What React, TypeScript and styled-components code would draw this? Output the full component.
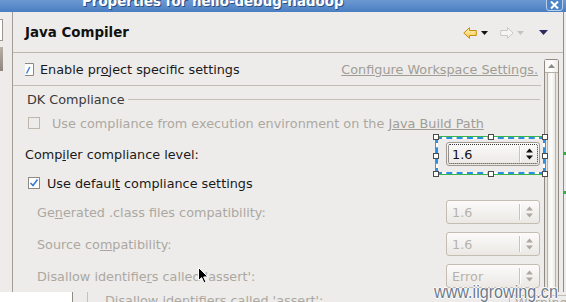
import React from 'react';
import styled, { createGlobalStyle } from 'styled-components';

const GlobalStyle = createGlobalStyle`
  html, body {
    margin: 0;
    padding: 0;
    background: #edeceb;
  }
  body {
    font-family: "DejaVu Sans", "Noto Sans", sans-serif;
    font-size: 12.8px;
    color: #1a1a1a;
  }
  * {
    box-sizing: border-box;
  }
`;

const Window = styled.div`
  position: relative;
  width: 566px;
  height: 302px;
  overflow: hidden;
  display: flex;
  flex-direction: column;
  background: #edeceb;
`;

const TitleBar = styled.div`
  flex: none;
  height: 12px;
  display: flex;
  align-items: flex-start;
  padding-left: 82px;
  padding-right: 3px;
  overflow: hidden;
  background: linear-gradient(#6d99d2, #4a7ec1);
`;

const TitleText = styled.div`
  flex: 1;
  margin-top: -5px;
  font-size: 13.4px;
  font-weight: bold;
  line-height: 13px;
  color: #fff;
  white-space: nowrap;
  text-shadow: 1px 1px 0 #2b4f85;
`;

const CloseButton = styled.div`
  width: 17px;
  height: 12px;
  margin-top: -1px;
  display: flex;
  align-items: center;
  justify-content: center;
  border: 1px solid #b9d0ec;
  border-radius: 0 0 3px 3px;
  background: #4f84c6;
`;

const Body = styled.div`
  flex: none;
  height: 280px;
  display: flex;
`;

const LeftStrip = styled.div`
  width: 13px;
  flex: none;
  display: flex;
  flex-direction: column;
  gap: 6px;
  padding-top: 7px;
  border-right: 1px solid #a19c94;
`;

const StubField = styled.div`
  width: 3px;
  height: 22px;
  background: #fff;
  border: 1px solid #9a958d;
  border-left: none;
`;

const StubButton = styled.div`
  width: 3px;
  height: 24px;
  background: linear-gradient(#b5afa5, #8d877e);
`;

const Main = styled.div`
  flex: 1;
  min-width: 0;
  display: flex;
  flex-direction: column;
  border-right: 1px solid #928d85;
`;

const Edge = styled.div`
  width: 2px;
  flex: none;
`;

const Header = styled.div`
  flex: none;
  height: 41px;
  display: flex;
  align-items: center;
  justify-content: space-between;
  padding: 0 15px 0 12px;
  border-bottom: 1px solid #bab6ae;
`;

const HeaderTitle = styled.div`
  font-size: 13.4px;
  font-weight: bold;
  color: #111;
`;

const NavBar = styled.div`
  display: flex;
  align-items: center;
  margin-top: 1px;
`;

const NavIcon = styled.svg<{ $gap?: number }>`
  display: block;
  margin-left: ${(p) => p.$gap ?? 0}px;
`;

const Lower = styled.div`
  flex: 1;
  min-height: 0;
  display: flex;
`;

const Content = styled.div`
  width: 530px;
  flex: none;
  display: flex;
  flex-direction: column;
  padding-right: 2px;
`;

const Row = styled.div<{ $height: number; $indent: number; $gap?: number; $spread?: boolean }>`
  flex: none;
  height: ${(p) => p.$height}px;
  display: flex;
  align-items: center;
  justify-content: ${(p) => (p.$spread ? 'space-between' : 'flex-start')};
  gap: ${(p) => p.$gap ?? 0}px;
  padding-left: ${(p) => p.$indent}px;
  padding-right: ${(p) => (p.$spread ? 1 : 0)}px;
  white-space: nowrap;
`;

const TopRow = styled(Row)`
  border-bottom: 1px solid #c2beb6;
`;

const ComplianceRow = styled(Row)`
  margin-top: 3px;
`;

const Label = styled.span<{ $disabled?: boolean }>`
  color: ${(p) => (p.$disabled ? '#aca8a0' : '#1a1a1a')};
`;

const Mn = styled.span`
  text-decoration: underline;
`;

const Link = styled.span<{ $push?: boolean }>`
  color: #a19d95;
  text-decoration: underline;
  margin-left: ${(p) => (p.$push ? 'auto' : '0')};
  margin-right: ${(p) => (p.$push ? '3px' : '0')};
`;

const GroupTitle = styled.div`
  flex: none;
  height: 26px;
  display: flex;
  align-items: center;
  gap: 3px;
  padding-left: 14px;
  padding-right: 1px;
  color: #3a3a3a;

  &::after {
    content: '';
    flex: 1;
    margin-top: 1px;
    border-top: 1px solid #c4c0b8;
  }
`;

const ComboFrame = styled.div`
  position: relative;
`;

const Combo = styled.div<{ $disabled?: boolean }>`
  position: relative;
  width: 94px;
  height: 24px;
  display: flex;
  align-items: center;
  border: 1px solid ${(p) => (p.$disabled ? '#c3bdb2' : '#9f998f')};
  border-radius: 3px;
  background: linear-gradient(#fcfbfa, #ebe8e4);
  color: ${(p) => (p.$disabled ? '#b6b2ab' : '#111')};
`;

const ComboText = styled.div`
  flex: 1;
  padding-left: 5px;
`;

const ComboButton = styled.div`
  width: 20px;
  height: 16px;
  display: flex;
  align-items: center;
  justify-content: center;
  border-left: 1px solid #c8c3bb;
  box-shadow: inset 1px 0 0 #fff;
`;

const FocusRing = styled.div`
  position: absolute;
  inset: 1px;
  border: 1px dotted #333;
  border-radius: 2px;
  pointer-events: none;
`;

const Selection = styled.div`
  position: absolute;
  left: -11px;
  top: -6px;
  right: -6px;
  bottom: -9px;
  border: 1px solid #39b54a;
  pointer-events: none;

  &::before,
  &::after {
    content: '';
    position: absolute;
    inset: 0;
    border: 2px solid #fff;
  }
  &::after {
    border: 2px dashed #2a8fe0;
  }
`;

const Handle = styled.div<{ $x: number; $y: number }>`
  position: absolute;
  z-index: 1;
  width: 6px;
  height: 6px;
  left: calc(${(p) => p.$x * 100}% - 3px);
  top: calc(${(p) => p.$y * 100}% - 3px);
  background: #fff;
  border: 1px solid #4a4a4a;
`;

const Scrollbar = styled.div`
  width: 15px;
  flex: none;
  margin: 6px 0 0 1px;
  display: flex;
  flex-direction: column;
  border: 1px solid #8f8a82;
  border-bottom: none;
  border-radius: 3px 3px 0 0;
  background: #e6e3de;
`;

const ScrollUp = styled.div`
  height: 13px;
  flex: none;
  display: flex;
  align-items: center;
  justify-content: center;
  background: linear-gradient(90deg, #f7f6f4, #fff, #ebe8e4);
  border-bottom: 1px solid #b5b0a8;
`;

const Thumb = styled.div`
  flex: 1;
  margin: 0 2px;
  border-left: 1px solid #b7b2aa;
  border-right: 1px solid #b7b2aa;
  background: linear-gradient(90deg, #f3f1ee, #fdfcfb, #ebe8e4);
`;

const RightGap = styled.div`
  flex: 1;
`;

const BottomStrip = styled.div`
  flex: none;
  height: 10px;
  display: flex;
  align-items: flex-start;
  white-space: nowrap;
  color: #aca8a0;
  line-height: 15px;
`;

const WhitePane = styled.div`
  width: 73px;
  height: 100%;
  flex: none;
  background: #fff;
  border-right: 1px solid #8f8a82;
`;

const Gutter = styled.div`
  width: 15px;
  height: 100%;
  flex: none;
  border-right: 1px solid #c6c2ba;
`;

const BottomLabel = styled.div`
  padding: 1px 0 0 17px;
`;

const BottomCombo = styled.div`
  margin-left: auto;
  margin-top: 3px;
  width: 57px;
  padding-left: 5px;
  border: 1px solid #c3bdb2;
  border-right: none;
  border-bottom: none;
  border-radius: 3px 0 0 0;
  line-height: 14px;
  overflow: hidden;
`;

const Mark = styled.div<{ $top: number }>`
  position: absolute;
  right: 0;
  top: ${(p) => p.$top}px;
  width: 3px;
  height: 3px;
  background: #2fb344;
`;

const Watermark = styled.div`
  position: absolute;
  left: 434px;
  top: 282px;
  font-family: "Liberation Sans", Arial, sans-serif;
  font-size: 19px;
  line-height: 20px;
  color: #6e7a8a;
  white-space: nowrap;
  transform: scaleX(0.85);
  transform-origin: left top;
  text-shadow: 1px 0 0 #fff, -1px 0 0 #fff, 0 1px 0 #fff, 0 -1px 0 #fff;
  pointer-events: none;
`;

const Cursor = styled.svg`
  position: absolute;
  left: 198px;
  top: 267px;
`;

const ClippedCheck = () => (
  <svg width="9" height="13" viewBox="0 0 9 13">
    <path d="M0 0.5H8.5V12.5H0" fill="#fff" stroke="#8d8982" />
    <path d="M1.5 10.5L4.8 4" stroke="#3b7fd2" strokeWidth="1.4" fill="none" />
  </svg>
);

const CheckBox = ({ checked, disabled }: { checked?: boolean; disabled?: boolean }) => (
  <svg width="12" height="13" viewBox="0 0 12 13">
    <rect
      x="0.5"
      y="0.5"
      width="11"
      height="11"
      fill={disabled ? '#edeceb' : '#fff'}
      stroke={disabled ? '#bdb6ab' : '#8d8982'}
    />
    {checked && (
      <path d="M2.5 6L5 8.5L9.5 2.5" stroke="#3b7fd2" strokeWidth="1.7" fill="none" />
    )}
  </svg>
);

const SpinArrows = ({ color }: { color: string }) => (
  <svg width="7" height="12" viewBox="0 0 7 12">
    <polygon points="3.5,0.5 0,4.5 7,4.5" fill={color} />
    <polygon points="0,7.5 7,7.5 3.5,11.5" fill={color} />
  </svg>
);

const ComboBox = ({
  value,
  disabled,
  focused,
}: {
  value: string;
  disabled?: boolean;
  focused?: boolean;
}) => (
  <Combo $disabled={disabled}>
    <ComboText>{value}</ComboText>
    <ComboButton>
      <SpinArrows color={disabled ? '#aca79f' : '#111'} />
    </ComboButton>
    {focused && <FocusRing />}
  </Combo>
);

const handles = [
  [0, 0],
  [0.5, 0],
  [1, 0],
  [0, 0.5],
  [1, 0.5],
  [0, 1],
  [0.5, 1],
  [1, 1],
];

const App: React.FC = () => {
  return (
    <Window>
      <GlobalStyle />
      <TitleBar>
        <TitleText>Properties for hello-debug-hadoop</TitleText>
        <CloseButton>
          <svg width="9" height="8" viewBox="0 0 9 8">
            <path d="M1 0.5L8 7.5M8 0.5L1 7.5" stroke="#fff" strokeWidth="2" />
          </svg>
        </CloseButton>
      </TitleBar>

      <Body>
        <LeftStrip>
          <StubField />
          <StubButton />
        </LeftStrip>

        <Main>
          <Header>
            <HeaderTitle>Java Compiler</HeaderTitle>
            <NavBar>
              <NavIcon width="14" height="12" viewBox="0 0 14 12">
                <defs>
                  <linearGradient id="back" x1="0" y1="0" x2="0" y2="1">
                    <stop offset="0" stopColor="#fff4c4" />
                    <stop offset="1" stopColor="#f6c84a" />
                  </linearGradient>
                </defs>
                <path
                  d="M0.8 6L6.5 0.7V3.5H13.3V8.5H6.5V11.3Z"
                  fill="url(#back)"
                  stroke="#c98b0e"
                  strokeLinejoin="round"
                />
              </NavIcon>
              <NavIcon $gap={4} width="7" height="4" viewBox="0 0 7 4">
                <polygon points="0,0 7,0 3.5,4" fill="#111" />
              </NavIcon>
              <NavIcon $gap={12} width="14" height="12" viewBox="0 0 14 12">
                <path
                  d="M13.2 6L7.5 0.7V3.5H0.7V8.5H7.5V11.3Z"
                  fill="#f6f5f3"
                  stroke="#cbc8c2"
                  strokeLinejoin="round"
                />
              </NavIcon>
              <NavIcon $gap={3} width="7" height="4" viewBox="0 0 7 4">
                <polygon points="0,0 7,0 3.5,4" fill="#c6c3be" />
              </NavIcon>
              <NavIcon $gap={15} width="9" height="5" viewBox="0 0 9 5">
                <polygon points="0,0 9,0 4.5,5" fill="#2c2c60" />
              </NavIcon>
            </NavBar>
          </Header>

          <Lower>
            <Content>
              <TopRow $height={33} $indent={12} $gap={6}>
                <ClippedCheck />
                <Label>
                  Enable pr<Mn>o</Mn>ject specific settings
                </Label>
                <Link $push>Configure Workspace Settings.</Link>
              </TopRow>

              <GroupTitle>DK Compliance</GroupTitle>

              <Row $height={23} $indent={15} $gap={12}>
                <CheckBox disabled />
                <Label $disabled>
                  Use compliance from execution environment on the <Link>Java Build Path</Link>
                </Label>
              </Row>

              <ComplianceRow $height={32} $indent={12} $spread>
                <Label>
                  Comp<Mn>i</Mn>ler compliance level:
                </Label>
                <ComboFrame>
                  <ComboBox value="1.6" focused />
                  <Selection>
                    {handles.map(([x, y]) => (
                      <Handle key={`${x}-${y}`} $x={x} $y={y} />
                    ))}
                  </Selection>
                </ComboFrame>
              </ComplianceRow>

              <Row $height={26} $indent={15} $gap={7}>
                <CheckBox checked />
                <Label>
                  Use defaul<Mn>t</Mn> compliance settings
                </Label>
              </Row>

              <Row $height={32} $indent={24} $spread>
                <Label $disabled>
                  Ge<Mn>n</Mn>erated .class files compatibility:
                </Label>
                <ComboBox value="1.6" disabled />
              </Row>

              <Row $height={32} $indent={24} $spread>
                <Label $disabled>
                  Source co<Mn>m</Mn>patibility:
                </Label>
                <ComboBox value="1.6" disabled />
              </Row>

              <Row $height={32} $indent={24} $spread>
                <Label $disabled>
                  Disallow identifie<Mn>r</Mn>s called 'assert':
                </Label>
                <ComboBox value="Error" disabled />
              </Row>
            </Content>

            <Scrollbar>
              <ScrollUp>
                <svg width="7" height="4" viewBox="0 0 7 4">
                  <polygon points="3.5,0 7,4 0,4" fill="#8e8a84" />
                </svg>
              </ScrollUp>
              <Thumb />
            </Scrollbar>
            <RightGap />
          </Lower>
        </Main>

        <Edge />
      </Body>

      <BottomStrip>
        <WhitePane />
        <Gutter />
        <BottomLabel>Disallow identifiers called 'assert':</BottomLabel>
        <BottomCombo>Warning</BottomCombo>
      </BottomStrip>

      <Mark $top={152} />
      <Mark $top={191} />

      <Watermark>www.iigrowing.cn</Watermark>

      <Cursor width="11" height="17" viewBox="0 0 11 17">
        <path
          d="M0.5 0.5V13.5L3.6 10.6L6 16L8 15.1L5.7 9.9H10Z"
          fill="#000"
          stroke="#fff"
          strokeWidth="1"
          strokeLinejoin="round"
        />
      </Cursor>
    </Window>
  );
};

export default App;
